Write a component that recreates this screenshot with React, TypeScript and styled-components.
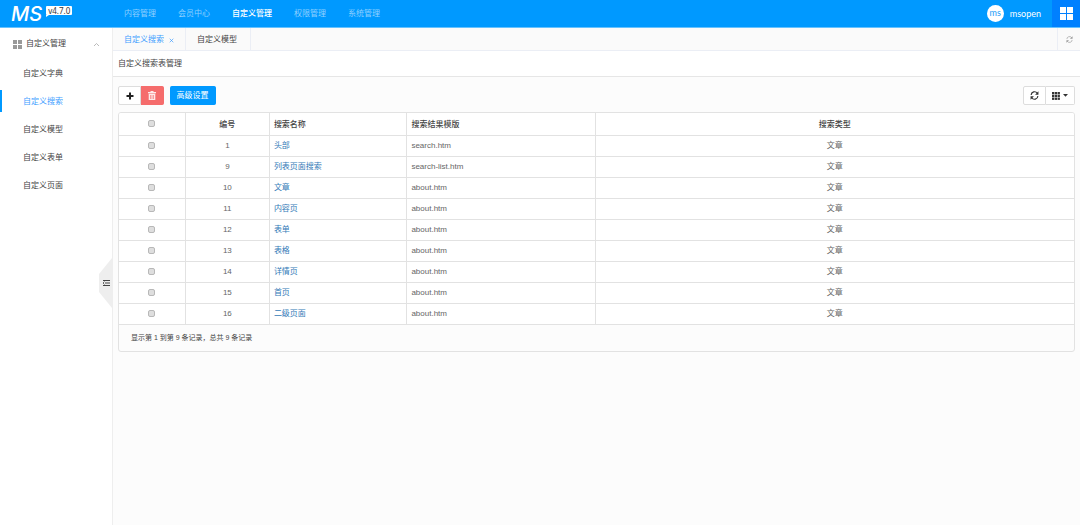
import React from 'react';
import styled, { createGlobalStyle, css } from 'styled-components';

const GlobalStyle = createGlobalStyle`
  *, *::before, *::after { box-sizing: border-box; }
  html, body, #root { height: 100%; }
  body {
    margin: 0;
    background: #fcfcfc;
    color: #444;
    font: 8px/12px "Liberation Sans", "Noto Sans CJK SC", sans-serif;
  }
  button { font: inherit; color: inherit; border: 0; padding: 0; background: none; cursor: pointer; }
  a { color: inherit; text-decoration: none; }
`;

const Page = styled.div`
  display: flex;
  flex-direction: column;
  min-height: 100%;
`;

const Header = styled.header`
  display: flex;
  align-items: stretch;
  height: 28px;
  background: #0099ff;
  border-bottom: 1px solid #66c2ff;
  color: #fff;
`;

const Brand = styled.div`
  display: flex;
  align-items: flex-start;
  width: 112px;
  padding-left: 11px;
  gap: 4px;
`;

const Logo = styled.span`
  padding-top: 1px;
  font: italic 500 20px/27px Inter, sans-serif;
`;

const Version = styled.span`
  position: relative;
  margin-top: 6px;
  padding: 0 2px;
  border-radius: 1px;
  background: #fff;
  color: #333;
  font: 8px/9px "Noto Sans", sans-serif;
  white-space: nowrap;

  &::after {
    content: "";
    position: absolute;
    left: 0;
    top: 100%;
    border-top: 2px solid #fff;
    border-right: 3px solid transparent;
  }
`;

const TopNav = styled.nav`
  display: flex;
  flex: 1;
  align-items: center;
  gap: 22px;
  padding-left: 12px;
`;

const TopLink = styled.a<{ $active?: boolean }>`
  color: ${p => (p.$active ? '#fff' : '#8fd0ff')};
  font-weight: ${p => (p.$active ? 500 : 400)};
`;

const User = styled.div`
  display: flex;
  align-items: center;
  gap: 6px;
  padding-right: 11px;
  font: 9px/12px Lato, sans-serif;
`;

const Avatar = styled.span`
  width: 17px;
  height: 17px;
  border-radius: 50%;
  background: #fff;
  color: #1a9cf7;
  text-align: center;
  line-height: 16px;
`;

const AppsButton = styled.button`
  display: grid;
  place-items: center;
  width: 28px;
  height: 27px;
  background: #0080ff;
`;

const Body = styled.div`
  display: flex;
  flex: 1;
`;

const Sidebar = styled.aside`
  position: relative;
  width: 113px;
  border-right: 1px solid #eee;
  background: #fff;
`;

const GroupButton = styled.button`
  display: flex;
  align-items: center;
  gap: 4px;
  width: 100%;
  height: 32px;
  padding: 0 12px 0 13px;
  text-align: left;
`;

const GroupLabel = styled.span`
  flex: 1;
`;

const SideLink = styled.a<{ $active?: boolean }>`
  display: block;
  height: 22px;
  margin-bottom: 6px;
  padding-left: 21px;
  border-left: 2px solid transparent;
  line-height: 24px;
  ${p => p.$active && css`
    border-left-color: #0099ff;
    color: #409eff;
  `}
`;

const SideMenu = styled.nav`
  padding-top: 2px;
`;

const CollapseButton = styled.button`
  position: absolute;
  right: 0;
  top: 230px;
  display: grid;
  place-items: center;
  width: 13px;
  height: 50px;
  background: #eee;
  clip-path: polygon(100% 0, 100% 100%, 0 68%, 0 32%);
`;

const Main = styled.main`
  flex: 1;
  min-width: 0;
`;

const Tabs = styled.div`
  display: flex;
  height: 23px;
  border-bottom: 1px solid #ebeef5;
  background: #fafafa;
`;

const Tab = styled.div<{ $active?: boolean }>`
  display: flex;
  align-items: center;
  gap: 5px;
  height: 22px;
  padding: 2px ${p => (p.$active ? 11 : 13)}px 0 11px;
  border-right: 1px solid #ebeef5;
  color: ${p => (p.$active ? '#409eff' : '#444')};
`;

const CloseButton = styled.button`
  display: grid;
  place-items: center;
`;

const RefreshTab = styled.button`
  display: grid;
  place-items: center;
  width: 23px;
  margin-left: auto;
  border-left: 1px solid #ebeef5;
`;

const Title = styled.h1`
  margin: 0;
  height: 26px;
  padding: 0 5px;
  border-bottom: 1px solid #e6e6e6;
  background: #fff;
  font-size: 8px;
  font-weight: 400;
  line-height: 25px;
`;

const Content = styled.div`
  padding: 9px 5px;
`;

const Toolbar = styled.div`
  display: flex;
  align-items: center;
  justify-content: space-between;
  margin-bottom: 7px;
`;

const Group = styled.div`
  display: flex;
`;

const ToolButton = styled.button<{ $tone?: 'danger' | 'primary' }>`
  display: flex;
  align-items: center;
  justify-content: center;
  gap: 3px;
  min-width: 23px;
  height: 19px;
  border: 1px solid #ddd;
  background: #fff;
  &:first-child { border-radius: 2px 0 0 2px; }
  &:last-child { border-radius: 0 2px 2px 0; }
  & + & { border-left: 0; }
  ${p => p.$tone === 'danger' && css`
    && { border-radius: 0 2px 2px 0; }
    border-color: #f56c6c;
    background: #f56c6c;
    color: #fff;
  `}
  ${p => p.$tone === 'primary' && css`
    width: 46px;
    margin-left: 6px;
    border-color: #0099ff;
    background: #0099ff;
    color: #fff;
    && { border-radius: 2px; }
  `}
`;

const WideToolButton = styled(ToolButton)`
  width: 29px;
`;

const Panel = styled.div`
  border: 1px solid #e2e2e2;
  border-radius: 3px;
  overflow: hidden;
`;

const Table = styled.table`
  width: 100%;
  table-layout: fixed;
  border-collapse: separate;
  border-spacing: 0;
  background: #fff;
`;

const Col = styled.col<{ $share?: number }>`
  ${p => p.$share && css`width: ${p.$share}%;`}
`;

const cell = css<{ $center?: boolean }>`
  padding: 0 4px;
  border-bottom: 1px solid #e2e2e2;
  text-align: ${p => (p.$center ? 'center' : 'left')};
  &:not(:last-child) { border-right: 1px solid #e2e2e2; }
`;

const HeadCell = styled.th<{ $center?: boolean }>`
  ${cell}
  height: 23px;
  padding-top: 1px;
  font-weight: 500;
`;

const Cell = styled.td<{ $center?: boolean }>`
  ${cell}
  height: 21px;
  color: #666;
`;

const RowLink = styled.a`
  color: #337ab7;
`;

const Check = styled.input`
  display: block;
  appearance: none;
  width: 7px;
  height: 7px;
  margin: 0 auto 2px;
  border: 1px solid #b8b8b8;
  border-radius: 2px;
  background: #dedede;
  &:checked { background: #409eff; }
`;

const Footer = styled.div`
  padding: 0 12px;
  font-size: 7px;
  line-height: 26px;
`;

const GridIcon = ({ size, color, gap = 1 }: { size: number; color: string; gap?: number }) => {
  const s = (size - gap) / 2;
  return (
    <svg width={size} height={size} fill={color} aria-hidden="true">
      <rect width={s} height={s} />
      <rect x={s + gap} width={s} height={s} />
      <rect y={s + gap} width={s} height={s} />
      <rect x={s + gap} y={s + gap} width={s} height={s} />
    </svg>
  );
};

const RefreshIcon = ({ size, color, weight }: { size: number; color: string; weight: number }) => (
  <svg width={size} height={size} viewBox="0 0 16 16" fill="none" stroke={color} strokeWidth={weight} aria-hidden="true">
    <path d="M2 7a6 6 0 0 1 11-3M14 9a6 6 0 0 1-11 3" />
    <path d="M15 0.500v6H9zM1 15.500v-6h6z" fill={color} stroke="none" />
  </svg>
);

const topItems = ['内容管理', '会员中心', '自定义管理', '权限管理', '系统管理'];
const sideItems = ['自定义字典', '自定义搜索', '自定义模型', '自定义表单', '自定义页面'];
const rows: [number, string, string][] = [
  [1, '头部', 'search.htm'],
  [9, '列表页面搜索', 'search-list.htm'],
  [10, '文章', 'about.htm'],
  [11, '内容页', 'about.htm'],
  [12, '表单', 'about.htm'],
  [13, '表格', 'about.htm'],
  [14, '详情页', 'about.htm'],
  [15, '首页', 'about.htm'],
  [16, '二级页面', 'about.htm'],
];

export default function App() {
  return (
    <Page lang="zh-CN">
      <GlobalStyle />
      <Header>
        <Brand>
          <Logo>MS</Logo>
          <Version>v4.7.0</Version>
        </Brand>
        <TopNav>
          {topItems.map(t => (
            <TopLink key={t} href="#" $active={t === '自定义管理'}>{t}</TopLink>
          ))}
        </TopNav>
        <User>
          <Avatar>ms</Avatar>
          <span>msopen</span>
        </User>
        <AppsButton aria-label="应用">
          <GridIcon size={13} color="#fff" gap={1} />
        </AppsButton>
      </Header>
      <Body>
        <Sidebar>
          <GroupButton>
            <GridIcon size={9} color="#999" />
            <GroupLabel>自定义管理</GroupLabel>
            <svg width="7" height="5" fill="none" stroke="#aaa" strokeWidth="0.8" aria-hidden="true">
              <path d="M1 4l2.500-2.500L6 4" />
            </svg>
          </GroupButton>
          <SideMenu>
            {sideItems.map(t => (
              <SideLink key={t} href="#" $active={t === '自定义搜索'}>{t}</SideLink>
            ))}
          </SideMenu>
          <CollapseButton aria-label="收起菜单">
            <svg width="8" height="8" stroke="#444" fill="none" aria-hidden="true">
              <path d="M1 1.500h7M3 4h5M1 6.500h7" />
              <path d="M2.500 2.500L1 4l1.500 1.500" strokeWidth="0.8" />
            </svg>
          </CollapseButton>
        </Sidebar>
        <Main>
          <Tabs>
            <Tab $active>
              <a href="#">自定义搜索</a>
              <CloseButton aria-label="关闭">
                <svg width="5" height="5" stroke="#409eff" strokeWidth="0.7" aria-hidden="true">
                  <path d="M0.700 0.700l3.600 3.600M4.300 0.700l-3.600 3.600" />
                </svg>
              </CloseButton>
            </Tab>
            <Tab><a href="#">自定义模型</a></Tab>
            <RefreshTab aria-label="刷新页面">
              <RefreshIcon size={7} color="#999" weight={1.5} />
            </RefreshTab>
          </Tabs>
          <Title>自定义搜索表管理</Title>
          <Content>
            <Toolbar>
              <Group>
                <ToolButton aria-label="新增">
                  <svg width="8" height="8" stroke="#222" strokeWidth="2" aria-hidden="true">
                    <path d="M4 0.500v7M0.500 4h7" />
                  </svg>
                </ToolButton>
                <ToolButton $tone="danger" aria-label="删除">
                  <svg width="8" height="9" fill="#fff" fillOpacity="0.85" aria-hidden="true">
                    <path fillRule="evenodd" d="M0 1h2.500V0h3v1H8v1.200H0zM0.700 2.800h6.600V9H0.700zM2.200 4v4h0.600V4zM3.700 4v4h0.600V4zM5.200 4v4h0.600V4z" />
                  </svg>
                </ToolButton>
                <ToolButton $tone="primary">高级设置</ToolButton>
              </Group>
              <Group>
                <ToolButton aria-label="刷新">
                  <RefreshIcon size={9} color="#333" weight={2} />
                </ToolButton>
                <WideToolButton aria-label="显示列">
                  <svg width="8" height="8" fill="#333" aria-hidden="true">
                    {[0, 2.8, 5.6].map(y => [0, 2.8, 5.6].map(x => <rect key={`${x}-${y}`} x={x} y={y} width="2.300" height="2.300" />))}
                  </svg>
                  <svg width="5" height="3" fill="#333" aria-hidden="true"><path d="M0 0h5L2.500 2.700z" /></svg>
                </WideToolButton>
              </Group>
            </Toolbar>
            <Panel>
              <Table>
                <colgroup>
                  <Col $share={7} />
                  <Col $share={8.8} />
                  <Col $share={14.4} />
                  <Col $share={19.7} />
                  <Col />
                </colgroup>
                <thead>
                  <tr>
                    <HeadCell $center><Check type="checkbox" aria-label="全选" /></HeadCell>
                    <HeadCell $center>编号</HeadCell>
                    <HeadCell>搜索名称</HeadCell>
                    <HeadCell>搜索结果模版</HeadCell>
                    <HeadCell $center>搜索类型</HeadCell>
                  </tr>
                </thead>
                <tbody>
                  {rows.map(([id, name, tpl]) => (
                    <tr key={id}>
                      <Cell $center><Check type="checkbox" aria-label={`选择 ${name}`} /></Cell>
                      <Cell $center>{id}</Cell>
                      <Cell><RowLink href="#">{name}</RowLink></Cell>
                      <Cell>{tpl}</Cell>
                      <Cell $center>文章</Cell>
                    </tr>
                  ))}
                </tbody>
              </Table>
              <Footer>显示第 1 到第 9 条记录，总共 9 条记录</Footer>
            </Panel>
          </Content>
        </Main>
      </Body>
    </Page>
  );
}
